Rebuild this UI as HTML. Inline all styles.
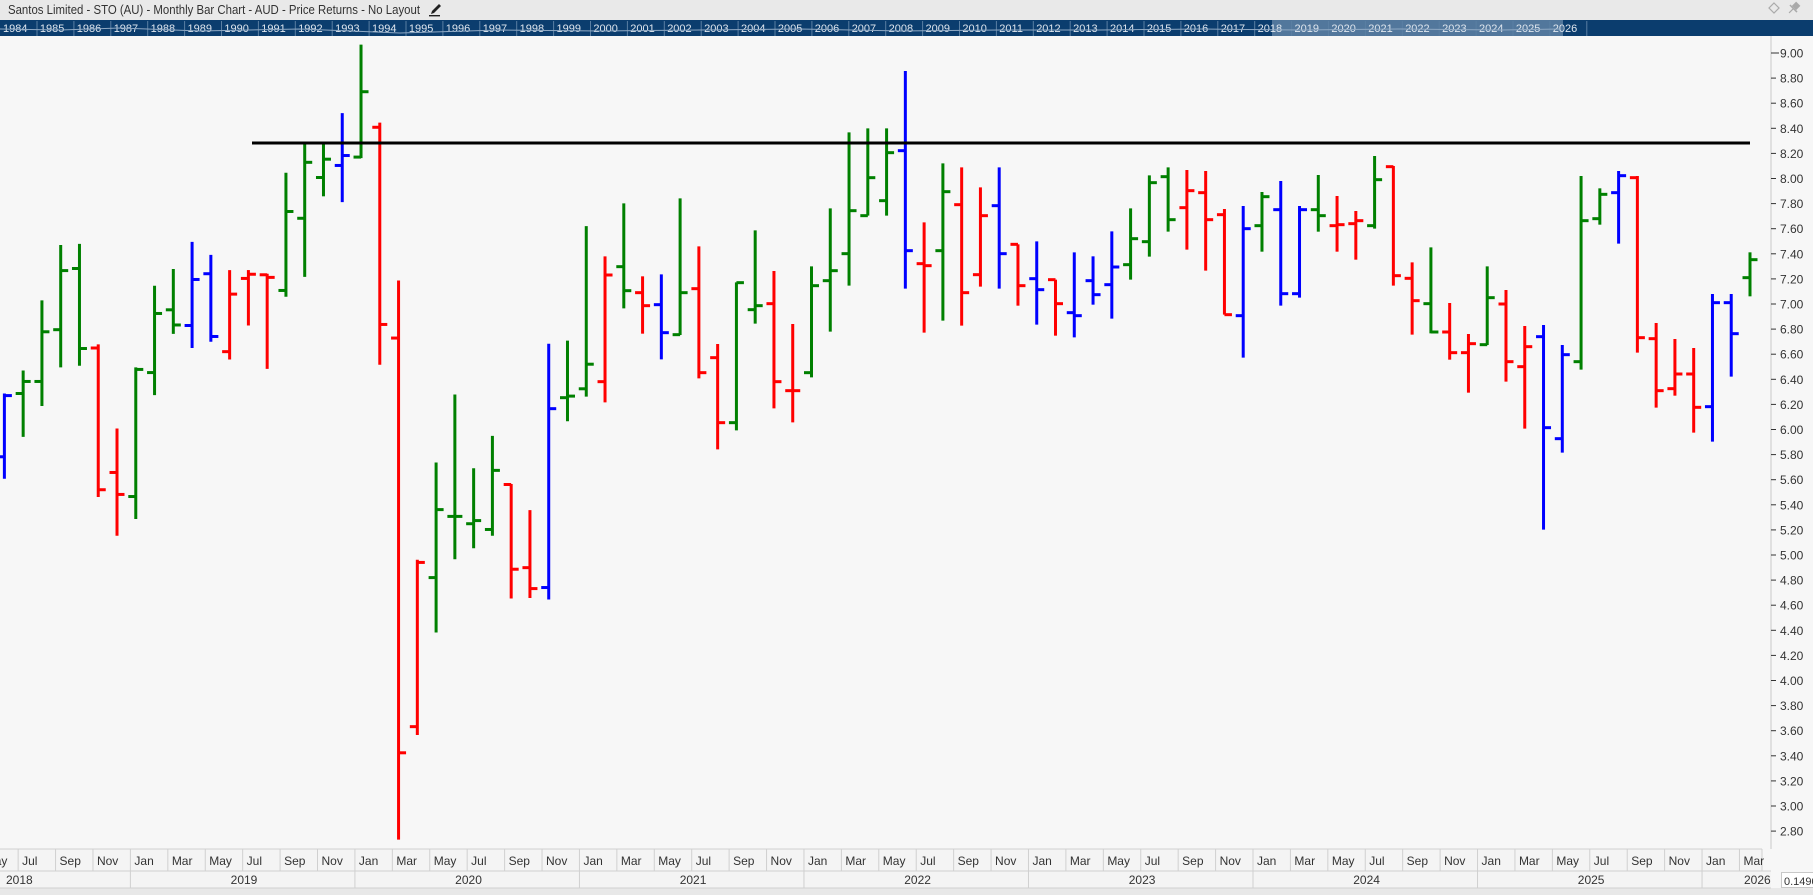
<!DOCTYPE html>
<html><head><meta charset="utf-8"><style>
html,body{margin:0;padding:0;background:#f7f7f7;width:1813px;height:895px;overflow:hidden}
svg{display:block}
text{font-family:"Liberation Sans",sans-serif}
</style></head><body>
<svg id="s" width="1813" height="895" viewBox="0 0 1813 895" xmlns="http://www.w3.org/2000/svg">
<rect x="0" y="0" width="1813" height="895" fill="#f7f7f7"/>
<rect x="0" y="0" width="1813" height="20" fill="#e9e9e9"/>
<text x="8" y="14" font-size="13" fill="#333" textLength="412" lengthAdjust="spacingAndGlyphs">Santos Limited - STO (AU) - Monthly Bar Chart - AUD - Price Returns - No Layout</text>
<g transform="translate(429,3)" fill="#222"><path d="M2 11 L3 8 L10 1 L12 3 L5 10 Z"/><rect x="0" y="12" width="11" height="1.4"/></g>
<path d="M1774 3 L1779 8 L1774 13 L1769 8 Z" fill="none" stroke="#aaa" stroke-width="1.2"/>
<g transform="translate(1794,8) rotate(45)" fill="#aaa"><rect x="-3" y="-6" width="6" height="6"/><rect x="-5" y="0" width="10" height="1.5"/><rect x="-0.6" y="1" width="1.2" height="6"/></g>
<rect x="0" y="20" width="1813" height="16" fill="#0b3d6e"/>
<rect x="1272" y="20" width="291" height="16" fill="#52779c"/>
<g id="nav"></g>
<g id="axis"></g>
<g id="bars"></g>
<line x1="252" y1="143" x2="1750" y2="143" stroke="#000" stroke-width="3"/>
<g id="bottom"></g>
</svg>
<script>
var NS="http://www.w3.org/2000/svg";
function el(p,t,a,txt){var e=document.createElementNS(NS,t);for(var k in a)e.setAttribute(k,a[k]);if(txt!=null)e.textContent=txt;document.getElementById(p).appendChild(e);return e;}
// navigator
for(var i=0;i<=42;i++){var x=2+i*36.9;
 el("nav","text",{x:x+1,y:32,"font-size":"11",fill:"#dfe6ee"},String(1984+i));
 el("nav","line",{x1:x+35,y1:21,x2:x+35,y2:36,stroke:"#5a7fa3","stroke-width":"1"});}
el("nav","polyline",{points:"0,29 60,30 120,28 200,31 300,29 400,33 500,30 600,31 700,30 800,29 900,31 1000,30 1100,30 1200,29 1300,30 1400,29 1500,30 1560,29",fill:"none",stroke:"#8fa9c4","stroke-width":"1"});
// price axis
el("axis","line",{x1:1771,y1:36,x2:1771,y2:849,stroke:"#c8c8c8","stroke-width":"1"});
for(var k=0;k<=31;k++){var p=9-k*0.2,y=53+k*0.2*125.5;
 el("axis","line",{x1:1771,y1:y,x2:k==0?1779:1776,y2:y,stroke:"#333","stroke-width":"1"});
 el("axis","text",{x:1780,y:y+4.5,"font-size":"12",fill:"#333"},p.toFixed(2));}
// bars
var C={g:"#008000",r:"#ff0000",b:"#0000ff"};
function X(m){return 1750-(98-m)*18.77;}
function bar(m,c,H,L,O,Cl){var x=X(m);
 el("bars","line",{x1:x,y1:H,x2:x,y2:L,stroke:C[c],"stroke-width":"3"});
 el("bars","line",{x1:x-7.5,y1:O,x2:x,y2:O,stroke:C[c],"stroke-width":"3"});
 el("bars","line",{x1:x,y1:Cl,x2:x+7.5,y2:Cl,stroke:C[c],"stroke-width":"3"});}
function add(data,m0,y0,s){data.forEach(function(d,i){bar(m0+i,d[0],y0+d[1]/s,y0+d[2]/s,y0+d[3]/s,y0+d[4]/s);});}
add([["b",695,858,816,699],["g",651,778,695,672],["g",517,719,672,577],["g",411,645,573,460],["g",409,642,456,609],["r",601,893,608,879],["r",762,967,846,888],["g",645,935,892,649],["g",489,698,655,542],["g",457,581,535,564],["b",405,608,565,477],["b",430,596,466,586],["r",459,630,615,505],["r",459,565,475,467],["r",466,648,468,473],["g",273,510,498,347],["g",218,472,360,253],["g",218,318,282,247],["b",159,329,259,240],["g",28,245,243,118],["r",177,640,186,563],["r",479,1548,589,1382],["r",1013,1348,1332,1018],["g",827,1152,1047,917],["g",697,1012,930,930],["g",838,991,944,938],["g",776,967,955,842],["r",868,1087,869,1031],["r",918,1086,1028,1068],["b",600,1089,1066,724],["g",594,748,703,700],["g",375,701,686,639]],5,30,1.912);
add([["r",619,1057,995,675],["g",460,775,650,722],["r",679,851,728,767],["b",673,928,764,848],["g",445,855,854,728],["r",589,985,716,968],["r",882,1198,923,1118],["g",697,1141,1118,698],["g",541,821,779,767],["r",663,1075,761,995],["r",822,1117,1022,1022],["g",649,982,968,707],["g",475,845,692,662],["g",247,707,611,482],["g",235,497,497,383],["g",235,497,452,308],["b",63,716,302,602],["r",517,848,641,647],["g",340,812,602,425],["r",352,827,464,728],["r",412,710,674,497],["b",352,716,467,611],["r",583,767,583,707],["b",574,824,686,719],["r",689,857,689,761],["b",607,862,788,797],["b",619,764,692,734],["b",544,806,704,651],["g",475,689,644,566],["g",376,620,575,398],["g",352,545,380,509]],37,50,3);
add([["r",150,389,263,212],["r",153,452,218,299],["r",267,584,284,584],["b",258,713,587,326],["g",216,395,317,230],["b",183,557,269,521],["b",258,533,521,269],["g",165,335,269,287],["r",228,395,317,314],["r",273,419,311,302],["g",108,326,317,179]],68,120,3);
add([["r",78,437,80,407],["r",367,584,415,482],["g",322,580,491,576],["r",489,659,576,638],["r",582,758,638,611],["g",379,615,614,473],["r",450,725,492,665],["r",558,866,680,620],["b",555,1169,590,863],["b",615,938,896,644],["g",108,689,665,242],["g",145,254,236,163],["b",93,311,158,107],["r",108,638,113,593],["r",549,803,596,752],["r",597,767,746,702],["r",624,878,702,802],["b",462,905,800,488],["b",462,710,488,581],["g",337,469,413,359]],79,140,3);
// bottom axis
el("bottom","rect",{x:0,y:888,width:1813,height:7,fill:"#e8e8e8"});
el("bottom","rect",{x:0,y:849,width:1762,height:22,fill:"#f4f4f4"});
el("bottom","rect",{x:0,y:871,width:1771,height:17,fill:"#f4f4f4"});
el("bottom","line",{x1:0,y1:849,x2:1762,y2:849,stroke:"#d0d0d0"});
el("bottom","line",{x1:0,y1:871,x2:1771,y2:871,stroke:"#d0d0d0"});
el("bottom","line",{x1:0,y1:888,x2:1771,y2:888,stroke:"#d0d0d0"});
el("bottom","line",{x1:1762,y1:849,x2:1762,y2:871,stroke:"#d0d0d0"});
var MN=["Jan","Mar","May","Jul","Sep","Nov"];
function LX(m){return 130.4+(m-12)*18.71;}
for(var m=4;m<=98;m+=2){var x=LX(m);
 el("bottom","line",{x1:x,y1:849,x2:x,y2:871,stroke:"#d0d0d0"});
 el("bottom","text",{x:x+4,y:865,"font-size":"12",fill:"#333"},MN[(m%12)/2]);}
var yb=[0];for(var yy=2019;yy<=2026;yy++)yb.push(LX((yy-2018)*12));yb.push(1771);
for(var i=0;i<yb.length-1;i++){var a=yb[i],b=yb[i+1];
 if(i>0)el("bottom","line",{x1:a,y1:871,x2:a,y2:888,stroke:"#d0d0d0"});
 var tx=(i==0)?6:(i==yb.length-2?1744:(a+b)/2-12);
 el("bottom","text",{x:tx,y:884,"font-size":"12",fill:"#333"},String(2018+i));}
el("bottom","rect",{x:1781.5,y:872.5,width:32,height:15,fill:"#fff",stroke:"#c8c8c8"});
el("bottom","text",{x:1784,y:885,"font-size":"11",fill:"#333"},"0.1490");
</script>
</body></html>
